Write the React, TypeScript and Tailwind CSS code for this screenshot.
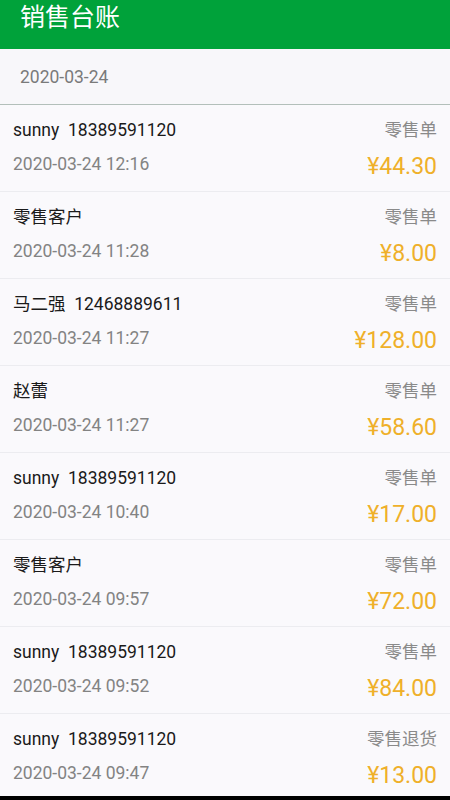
import React from "react";

const rows = [
  { name: "sunny  18389591120", time: "2020-03-24 12:16", type: "零售单", amount: "¥44.30" },
  { name: "零售客户", time: "2020-03-24 11:28", type: "零售单", amount: "¥8.00" },
  { name: "马二强  12468889611", time: "2020-03-24 11:27", type: "零售单", amount: "¥128.00" },
  { name: "赵蕾", time: "2020-03-24 11:27", type: "零售单", amount: "¥58.60" },
  { name: "sunny  18389591120", time: "2020-03-24 10:40", type: "零售单", amount: "¥17.00" },
  { name: "零售客户", time: "2020-03-24 09:57", type: "零售单", amount: "¥72.00" },
  { name: "sunny  18389591120", time: "2020-03-24 09:52", type: "零售单", amount: "¥84.00" },
  { name: "sunny  18389591120", time: "2020-03-24 09:47", type: "零售退货", amount: "¥13.00" },
];

export default function App() {
  return (
    <div
      className="w-[450px] h-[800px] overflow-hidden flex flex-col bg-[#faf9fc]"
      style={{ fontFamily: 'Roboto, "Noto Sans CJK SC", sans-serif' }}
    >
      <div className="h-[49px] shrink-0 bg-[#00a23a] flex items-start pl-[20px]">
        <span className="text-white text-[25px] leading-[35px]">销售台账</span>
      </div>
      <div className="h-[56px] shrink-0 bg-[#f8f7fa] flex items-center pl-[20px] border-b border-[#b3bfba]">
        <span className="text-[#7a7a7a] text-[17.5px] leading-none pt-[2px]">2020-03-24</span>
      </div>
      <div className="flex-1 min-h-0 overflow-hidden flex flex-col">
        {rows.map((r, i) => (
          <div
            key={i}
            className="h-[87px] shrink-0 flex justify-between pl-[13px] pr-[13px] border-b border-[#ececf0] bg-[#faf9fc]"
          >
            <div className="flex flex-col">
              <span className="text-[#1a1a1a] text-[17.5px] leading-none mt-[17px] whitespace-pre">{r.name}</span>
              <span className="text-[#838383] text-[17.5px] leading-none mt-[16px]">{r.time}</span>
            </div>
            <div className="flex flex-col items-end">
              <span className="text-[#8a8a8a] text-[17.5px] leading-none mt-[17px]">{r.type}</span>
              <span className="text-[#efb02a] text-[23px] leading-none mt-[15px]">{r.amount}</span>
            </div>
          </div>
        ))}
      </div>
      <div className="h-[4px] shrink-0 bg-black" />
    </div>
  );
}
